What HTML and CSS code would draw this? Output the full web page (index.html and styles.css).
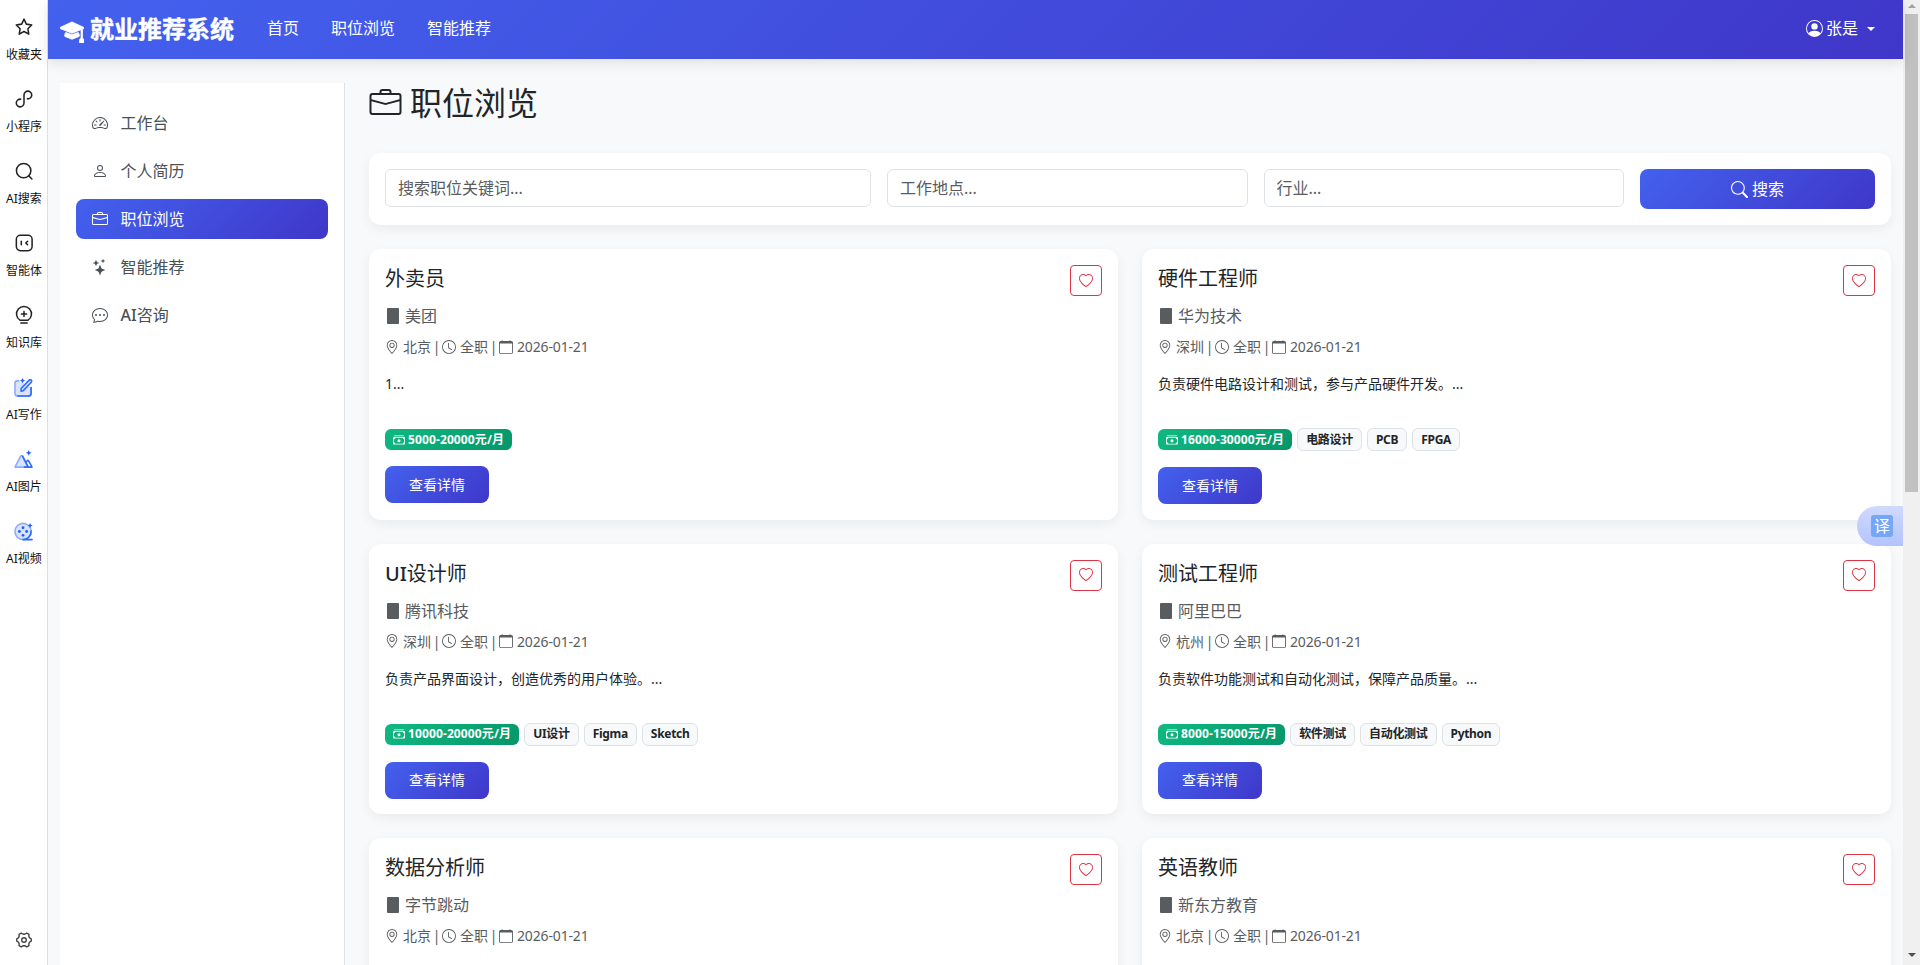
FILE: index.html
```html
<!DOCTYPE html>
<html lang="zh-CN">
<head>
<meta charset="utf-8">
<title>职位浏览</title>
<link rel="stylesheet" href="styles.css">
</head>
<body>
<svg class="sprite" aria-hidden="true">
  <symbol id="cap" viewBox="0 0 16 16"><path d="M8.211 2.047a.5.5 0 0 0-.422 0l-7.5 3.5a.5.5 0 0 0 .025.917l7.5 3a.5.5 0 0 0 .372 0L14 7.14V13a1 1 0 0 0-1 1v2h3v-2a1 1 0 0 0-1-1V6.739l.686-.275a.5.5 0 0 0 .025-.917z"/><path d="M4.176 9.032a.5.5 0 0 0-.656.327l-.5 1.7a.5.5 0 0 0 .294.605l4.5 1.8a.5.5 0 0 0 .372 0l4.5-1.8a.5.5 0 0 0 .294-.605l-.5-1.7a.5.5 0 0 0-.656-.327L8 10.466z"/></symbol>
  <symbol id="speed" viewBox="0 0 16 16"><path d="M8 4a.5.5 0 0 1 .5.5V6a.5.5 0 0 1-1 0V4.5A.5.5 0 0 1 8 4M3.732 5.732a.5.5 0 0 1 .707 0l.915.914a.5.5 0 1 1-.708.708l-.914-.915a.5.5 0 0 1 0-.707M2 10a.5.5 0 0 1 .5-.5h1.586a.5.5 0 0 1 0 1H2.5A.5.5 0 0 1 2 10m9.5 0a.5.5 0 0 1 .5-.5h1.5a.5.5 0 0 1 0 1H12a.5.5 0 0 1-.5-.5m.754-4.246a.39.39 0 0 0-.527-.02L7.547 9.31a.91.91 0 1 0 1.302 1.258l3.434-4.297a.39.39 0 0 0-.029-.518z"/><path fill-rule="evenodd" d="M0 10a8 8 0 1 1 15.547 2.661c-.442 1.253-1.845 1.602-2.932 1.25C11.309 13.488 9.475 13 8 13c-1.474 0-3.31.488-4.615.911-1.087.352-2.49.003-2.932-1.25A8 8 0 0 1 0 10m8-7a7 7 0 0 0-6.603 9.329c.203.575.923.876 1.68.63C4.397 12.533 6.358 12 8 12s3.604.532 4.923.96c.757.245 1.477-.056 1.68-.631A7 7 0 0 0 8 3"/></symbol>
  <symbol id="person" viewBox="0 0 16 16"><path d="M8 8a3 3 0 1 0 0-6 3 3 0 0 0 0 6m2-3a2 2 0 1 1-4 0 2 2 0 0 1 4 0m4 8c0 1-1 1-1 1H3s-1 0-1-1 1-4 6-4 6 3 6 4m-1-.004c-.001-.246-.154-.986-.832-1.664C11.516 10.68 10.289 10 8 10s-3.516.68-4.168 1.332c-.678.678-.83 1.418-.832 1.664z"/></symbol>
  <symbol id="case" viewBox="0 0 16 16"><path d="M6.5 1A1.5 1.5 0 0 0 5 2.5V3H1.5A1.5 1.5 0 0 0 0 4.5v8A1.5 1.5 0 0 0 1.5 14h13a1.5 1.5 0 0 0 1.5-1.5v-8A1.5 1.5 0 0 0 14.5 3H11v-.5A1.5 1.5 0 0 0 9.5 1zm0 1h3a.5.5 0 0 1 .5.5V3H6v-.5a.5.5 0 0 1 .5-.5m1.886 6.914L15 7.151V12.5a.5.5 0 0 1-.5.5h-13a.5.5 0 0 1-.5-.5V7.15l6.614 1.764a1.5 1.5 0 0 0 .772 0M1.5 4h13a.5.5 0 0 1 .5.5v1.616L8.129 7.948a.5.5 0 0 1-.258 0L1 6.116V4.5a.5.5 0 0 1 .5-.5"/></symbol>
  <symbol id="stars" viewBox="0 0 16 16"><path d="M7.657 6.247c.11-.33.576-.33.686 0l.645 1.937a2.89 2.89 0 0 0 1.829 1.828l1.936.645c.33.11.33.576 0 .686l-1.937.645a2.89 2.89 0 0 0-1.828 1.829l-.645 1.936a.361.361 0 0 1-.686 0l-.645-1.937a2.89 2.89 0 0 0-1.828-1.828l-1.937-.645a.361.361 0 0 1 0-.686l1.937-.645a2.89 2.89 0 0 0 1.828-1.828zM3.794 1.148a.217.217 0 0 1 .412 0l.387 1.162c.173.518.579.924 1.097 1.097l1.162.387a.217.217 0 0 1 0 .412l-1.162.387A1.73 1.73 0 0 0 4.593 5.69l-.387 1.162a.217.217 0 0 1-.412 0L3.407 5.69A1.73 1.73 0 0 0 2.31 4.593l-1.162-.387a.217.217 0 0 1 0-.412l1.162-.387A1.73 1.73 0 0 0 3.407 2.31zM10.863.099a.145.145 0 0 1 .274 0l.258.774c.115.346.386.617.732.732l.774.258a.145.145 0 0 1 0 .274l-.774.258a1.16 1.16 0 0 0-.732.732l-.258.774a.145.145 0 0 1-.274 0l-.258-.774a1.16 1.16 0 0 0-.732-.732L9.1 2.137a.145.145 0 0 1 0-.274l.774-.258c.346-.115.617-.386.732-.732z"/></symbol>
  <symbol id="chat" viewBox="0 0 16 16"><path d="M5 8a1 1 0 1 1-2 0 1 1 0 0 1 2 0m4 0a1 1 0 1 1-2 0 1 1 0 0 1 2 0m3 1a1 1 0 1 0 0-2 1 1 0 0 0 0 2"/><path d="m2.165 15.803.02-.004c1.83-.363 2.948-.842 3.468-1.105A9 9 0 0 0 8 15c4.418 0 8-3.134 8-7s-3.582-7-8-7-8 3.134-8 7c0 1.76.743 3.37 1.97 4.6a10.4 10.4 0 0 1-.524 2.318l-.003.011a11 11 0 0 1-.244.637c-.079.186.074.394.273.362a22 22 0 0 0 .693-.125m.8-3.108a1 1 0 0 0-.287-.801C1.618 10.83 1 9.468 1 8c0-3.192 3.004-6 7-6s7 2.808 7 6-3.004 6-7 6a8 8 0 0 1-2.088-.272 1 1 0 0 0-.711.074c-.387.196-1.24.57-2.634.893a11 11 0 0 0 .398-2"/></symbol>
  <symbol id="user" viewBox="0 0 16 16"><path d="M11 6a3 3 0 1 1-6 0 3 3 0 0 1 6 0"/><path fill-rule="evenodd" d="M0 8a8 8 0 1 1 16 0A8 8 0 0 1 0 8m8-7a7 7 0 0 0-5.468 11.37C3.242 11.226 4.805 10 8 10s4.757 1.225 5.468 2.37A7 7 0 0 0 8 1"/></symbol>
  <symbol id="search" viewBox="0 0 16 16"><path d="M11.742 10.344a6.5 6.5 0 1 0-1.397 1.398h-.001q.044.06.098.115l3.85 3.85a1 1 0 0 0 1.415-1.414l-3.85-3.85a1 1 0 0 0-.115-.1zM12 6.5a5.5 5.5 0 1 1-11 0 5.5 5.5 0 0 1 11 0"/></symbol>
  <symbol id="heart" viewBox="0 0 16 16"><path d="m8 2.748-.717-.737C5.6.281 2.514.878 1.4 3.053c-.523 1.023-.641 2.5.314 4.385.92 1.815 2.834 3.989 6.286 6.357 3.452-2.368 5.365-4.542 6.286-6.357.955-1.886.838-3.362.314-4.385C13.486.878 10.4.28 8.717 2.01zM8 15C-7.333 4.868 3.279-3.04 7.824 1.143q.09.083.176.171a3 3 0 0 1 .176-.17C12.72-3.042 23.333 4.867 8 15"/></symbol>
  <symbol id="geo" viewBox="0 0 16 16"><path d="M12.166 8.94c-.524 1.062-1.234 2.12-1.96 3.07A32 32 0 0 1 8 14.58a32 32 0 0 1-2.206-2.57c-.726-.95-1.436-2.008-1.96-3.07C3.304 7.867 3 6.862 3 6a5 5 0 0 1 10 0c0 .862-.305 1.867-.834 2.94M8 16s6-5.686 6-10A6 6 0 0 0 2 6c0 4.314 6 10 6 10"/><path d="M8 8a2 2 0 1 1 0-4 2 2 0 0 1 0 4m0 1a3 3 0 1 0 0-6 3 3 0 0 0 0 6"/></symbol>
  <symbol id="clock" viewBox="0 0 16 16"><path d="M8 3.5a.5.5 0 0 0-1 0V9a.5.5 0 0 0 .252.434l3.5 2a.5.5 0 0 0 .496-.868L8 8.71z"/><path d="M8 16A8 8 0 1 0 8 0a8 8 0 0 0 0 16m7-8A7 7 0 1 1 1 8a7 7 0 0 1 14 0"/></symbol>
  <symbol id="cal" viewBox="0 0 16 16"><path d="M3.5 0a.5.5 0 0 1 .5.5V1h8V.5a.5.5 0 0 1 1 0V1h1a2 2 0 0 1 2 2v11a2 2 0 0 1-2 2H2a2 2 0 0 1-2-2V3a2 2 0 0 1 2-2h1V.5a.5.5 0 0 1 .5-.5M1 4v10a1 1 0 0 0 1 1h12a1 1 0 0 0 1-1V4z"/></symbol>
  <symbol id="cash" viewBox="0 0 16 16"><path d="M1 3a1 1 0 0 1 1-1h12a1 1 0 0 1 1 1zm7 8a2 2 0 1 0 0-4 2 2 0 0 0 0 4"/><path d="M0 5a1 1 0 0 1 1-1h14a1 1 0 0 1 1 1v8a1 1 0 0 1-1 1H1a1 1 0 0 1-1-1zm3 0a2 2 0 0 1-2 2v4a2 2 0 0 1 2 2h10a2 2 0 0 1 2-2V7a2 2 0 0 1-2-2z"/></symbol>
</svg>

<div class="window">
  <aside class="rail">
    <div class="rail-list">
      <div class="rail-item"><svg class="rail-icon" viewBox="0 0 20 20"><path d="M10 1.300l2.600 5.500 6 .9-4.300 4.200 1 6-5.300-2.900-5.300 2.900 1-6-4.300-4.200 6-.9z"/></svg><span>收藏夹</span></div>
      <div class="rail-item"><svg class="rail-icon" viewBox="0 0 20 20"><path d="M6.300 10.200A4.300 4.300 0 1 0 10 14.400V5.600A4.300 4.300 0 1 1 13.700 9.800"/></svg><span>小程序</span></div>
      <div class="rail-item"><svg class="rail-icon" viewBox="0 0 20 20"><circle cx="9.6" cy="9.6" r="8"/><path d="M15.3 15.3l3.5 3.5"/></svg><span>AI搜索</span></div>
      <div class="rail-item"><svg class="rail-icon" viewBox="0 0 20 20"><rect x="1.5" y="1.5" width="17.5" height="17" rx="4.5"/><path d="M7 8v4M14 8l-2 2 2 2"/></svg><span>智能体</span></div>
      <div class="rail-item"><svg class="rail-icon" viewBox="0 0 20 20"><path d="M5.500 15.800a8.300 8.300 0 1 1 9 0zM6.500 19h7M10 6v5.600M7.200 8.800h5.600"/></svg><span>知识库</span></div>
      <div class="rail-item"><svg class="rail-icon tint" viewBox="0 0 20 20"><path class="soft" d="M5 3H3.500Q1 3 1 5.500v10.500Q1 19 4 19h11q3 0 3-3V10"/><path d="M18 10v6q0 3-3 3H4"/><path class="pen" d="M7.500 14v-3L16 2.300q1.200-1 2.200 0t0 2.200L9.500 13.500z"/><path class="dot" d="M9 0l.9 1.800 1.800.9-1.800.9L9 5.400l-.9-1.800-1.800-.9 1.800-.9z"/></svg><span>AI写作</span></div>
      <div class="rail-item"><svg class="rail-icon tint" viewBox="0 0 20 20"><path class="soft" d="M1 18L7 6.500Q8 5 9 6.500L15 18z"/><path d="M11 18H19L15.400 11.500q-.8-1.200-1.600 0l-1.200 2L9 6.500M12.600 13.500L15 18"/><path class="dot" d="M15.500 0l.9 2.100 2.100.9-2.100.9-.9 2.100-.9-2.100-2.100-.9 2.100-.9z"/></svg><span>AI图片</span></div>
      <div class="rail-item"><svg class="rail-icon tint" viewBox="0 0 20 20"><circle class="soft" cx="9.500" cy="10" r="8.500"/><path d="M18 9.500a8.500 8.500 0 0 1-8.500 9H19"/><g class="dot"><circle cx="9.500" cy="6" r="1.500"/><circle cx="5.700" cy="10" r="1.500"/><circle cx="13.300" cy="10" r="1.500"/><circle cx="9.500" cy="14" r="1.500"/><path d="M17 1l.9 1.800 1.800.9-1.800.9-.9 1.800-.9-1.800-1.800-.9 1.800-.9z"/></g></svg><span>AI视频</span></div>
    </div>
    <svg class="gear" viewBox="0 0 16 16"><path d="M5.200 1.100Q6.500 2.300 8 2.300t2.800-1.200l2.200 1.300q-.4 1.800.3 3t2.200 1.700v1.800q-1.500.5-2.200 1.700t-.3 3l-2.200 1.300Q9.500 13.700 8 13.700t-2.800 1.200L3 13.600q.4-1.800-.3-3T.5 8.900V7.100Q2 6.600 2.700 5.400t.3-3z"/><circle cx="8" cy="8" r="2.300"/></svg>
  </aside>

  <div class="page">
    <nav class="navbar">
      <div class="brand"><svg class="icon"><use href="#cap"/></svg><span>就业推荐系统</span></div>
      <div class="links"><a>首页</a><a>职位浏览</a><a>智能推荐</a></div>
      <div class="account"><svg class="icon"><use href="#user"/></svg><span>张是</span><i class="caret"></i></div>
    </nav>
    <div class="body">
      <div class="sidebar">
        <a class="side-link"><svg class="icon"><use href="#speed"/></svg>工作台</a>
        <a class="side-link"><svg class="icon"><use href="#person"/></svg>个人简历</a>
        <a class="side-link active"><svg class="icon"><use href="#case"/></svg>职位浏览</a>
        <a class="side-link"><svg class="icon"><use href="#stars"/></svg>智能推荐</a>
        <a class="side-link"><svg class="icon"><use href="#chat"/></svg><span><span class="latin">AI</span>咨询</span></a>
      </div>
      <main class="main">
        <h2 class="heading"><svg class="icon"><use href="#case"/></svg>职位浏览</h2>
        <form class="panel filters">
          <input class="field" placeholder="搜索职位关键词...">
          <input class="field" placeholder="工作地点...">
          <input class="field" placeholder="行业...">
          <button type="button" class="submit"><svg class="icon"><use href="#search"/></svg>搜索</button>
        </form>
        <div class="jobs">
          <article class="panel job">
            <div class="job-head"><h5>外卖员</h5><span class="fav"><svg class="icon"><use href="#heart"/></svg></span></div>
            <div class="company"><i class="building"></i>美团</div>
            <div class="meta"><svg class="icon"><use href="#geo"/></svg><span>北京</span><b>|</b><svg class="icon"><use href="#clock"/></svg><span>全职</span><b>|</b><svg class="icon"><use href="#cal"/></svg><span class="date">2026-01-21</span></div>
            <p class="desc">1...</p>
            <div class="tags plain"><span class="salary"><svg class="icon"><use href="#cash"/></svg>5000-20000元/月</span></div>
            <a class="detail">查看详情</a>
          </article>
          <article class="panel job">
            <div class="job-head"><h5>硬件工程师</h5><span class="fav"><svg class="icon"><use href="#heart"/></svg></span></div>
            <div class="company"><i class="building"></i>华为技术</div>
            <div class="meta"><svg class="icon"><use href="#geo"/></svg><span>深圳</span><b>|</b><svg class="icon"><use href="#clock"/></svg><span>全职</span><b>|</b><svg class="icon"><use href="#cal"/></svg><span class="date">2026-01-21</span></div>
            <p class="desc">负责硬件电路设计和测试，参与产品硬件开发。...</p>
            <div class="tags"><span class="salary"><svg class="icon"><use href="#cash"/></svg>16000-30000元/月</span><span class="tag">电路设计</span><span class="tag">PCB</span><span class="tag">FPGA</span></div>
            <a class="detail">查看详情</a>
          </article>
          <article class="panel job">
            <div class="job-head"><h5><span class="latin">UI</span>设计师</h5><span class="fav"><svg class="icon"><use href="#heart"/></svg></span></div>
            <div class="company"><i class="building"></i>腾讯科技</div>
            <div class="meta"><svg class="icon"><use href="#geo"/></svg><span>深圳</span><b>|</b><svg class="icon"><use href="#clock"/></svg><span>全职</span><b>|</b><svg class="icon"><use href="#cal"/></svg><span class="date">2026-01-21</span></div>
            <p class="desc">负责产品界面设计，创造优秀的用户体验。...</p>
            <div class="tags"><span class="salary"><svg class="icon"><use href="#cash"/></svg>10000-20000元/月</span><span class="tag">UI设计</span><span class="tag">Figma</span><span class="tag">Sketch</span></div>
            <a class="detail">查看详情</a>
          </article>
          <article class="panel job">
            <div class="job-head"><h5>测试工程师</h5><span class="fav"><svg class="icon"><use href="#heart"/></svg></span></div>
            <div class="company"><i class="building"></i>阿里巴巴</div>
            <div class="meta"><svg class="icon"><use href="#geo"/></svg><span>杭州</span><b>|</b><svg class="icon"><use href="#clock"/></svg><span>全职</span><b>|</b><svg class="icon"><use href="#cal"/></svg><span class="date">2026-01-21</span></div>
            <p class="desc">负责软件功能测试和自动化测试，保障产品质量。...</p>
            <div class="tags"><span class="salary"><svg class="icon"><use href="#cash"/></svg>8000-15000元/月</span><span class="tag">软件测试</span><span class="tag">自动化测试</span><span class="tag">Python</span></div>
            <a class="detail">查看详情</a>
          </article>
          <article class="panel job">
            <div class="job-head"><h5>数据分析师</h5><span class="fav"><svg class="icon"><use href="#heart"/></svg></span></div>
            <div class="company"><i class="building"></i>字节跳动</div>
            <div class="meta"><svg class="icon"><use href="#geo"/></svg><span>北京</span><b>|</b><svg class="icon"><use href="#clock"/></svg><span>全职</span><b>|</b><svg class="icon"><use href="#cal"/></svg><span class="date">2026-01-21</span></div>
          </article>
          <article class="panel job">
            <div class="job-head"><h5>英语教师</h5><span class="fav"><svg class="icon"><use href="#heart"/></svg></span></div>
            <div class="company"><i class="building"></i>新东方教育</div>
            <div class="meta"><svg class="icon"><use href="#geo"/></svg><span>北京</span><b>|</b><svg class="icon"><use href="#clock"/></svg><span>全职</span><b>|</b><svg class="icon"><use href="#cal"/></svg><span class="date">2026-01-21</span></div>
          </article>
        </div>
      </main>
    </div>
    <div class="translate"><span>译</span></div>
  </div>

  <div class="scrollbar"><i class="arrow up"></i><div class="thumb"></div><i class="arrow down"></i></div>
</div>
</body>
</html>
```
FILE: styles.css
```css
* { box-sizing: border-box; }
body {
  margin: 0;
  overflow: hidden;
  background: #f8f9fa;
  color: #212529;
  font: 400 16px/24px "Noto Sans", "Noto Sans CJK SC", sans-serif;
}
.sprite { display: none; }
.icon { display: block; flex: none; width: 1em; height: 1em; fill: currentColor; }
.latin { font-weight: 500; }

.window { display: flex; height: 965px; overflow: hidden; }

/* browser rail */
.rail {
  flex: none;
  width: 48px;
  display: flex;
  flex-direction: column;
  justify-content: space-between;
  align-items: center;
  padding: 18px 0 17px 1px;
  background: #fff;
  border-right: 1px solid #dcdfe4;
}
.rail-item {
  display: flex;
  flex-direction: column;
  align-items: center;
  gap: 10px;
  height: 72px;
  font-size: 12px;
  line-height: 18px;
  color: #111;
  white-space: nowrap;
}
.rail-icon {
  width: 18px;
  height: 18px;
  overflow: visible;
  fill: none;
  stroke: #222;
  stroke-width: 1.7;
  stroke-linejoin: round;
  stroke-linecap: round;
}
.rail-icon.tint { width: 19px; height: 19px; margin-bottom: -1px; stroke: #2f6bff; }
.tint .soft { stroke: #8fadf8; fill: #d9e3fd; }
.tint .pen { fill: #d9e3fd; }
.tint .dot { fill: #1f5fff; stroke: none; }
.gear { width: 16px; height: 16px; fill: none; stroke: #444; stroke-width: 1.4; stroke-linejoin: round; }

/* page */
.page { position: relative; flex: 1; min-width: 0; background: #f8f9fb; }
.navbar {
  display: flex;
  align-items: center;
  height: 59px;
  padding: 0 28px 0 12px;
  color: #fff;
  background: linear-gradient(135deg, #4361ee, #3f37c9);
  box-shadow: 0 4px 12px rgba(0, 0, 0, .1);
}
.brand {
  display: flex;
  align-items: center;
  gap: 6px;
  margin-right: 32px;
  font-size: 24px;
  font-weight: 700;
  line-height: 36px;
  -webkit-text-stroke: .4px #fff;
}
.brand .icon { stroke: currentColor; stroke-width: .5; margin-top: 2px; }
.brand span { margin-top: -2px; }
.links { display: flex; gap: 32px; margin: -4px 0 0 1px; }
.account { display: flex; align-items: center; gap: 3px; margin-left: auto; margin-top: -2px; }
.account .icon { width: 17px; height: 17px; }
.account span { margin-top: -1px; }
.caret { margin-left: 6px; border: 4px solid transparent; border-top-color: #fff; border-bottom: 0; }

.body { display: flex; gap: 24px; padding: 24px 12px 0; }
.sidebar {
  flex: none;
  width: 285px;
  height: 900px;
  padding: 20px 16px;
  background: #fff;
  border-right: 1px solid #dee2e6;
}
.side-link {
  display: flex;
  align-items: center;
  gap: 12.5px;
  height: 40px;
  margin-bottom: 8px;
  padding: 0 16px;
  border-radius: 8px;
  color: #495057;
}
.side-link.active { color: #fff; background: linear-gradient(135deg, #4361ee, #3f37c9); }

.main { flex: 1; min-width: 0; }
.heading { display: flex; align-items: center; gap: 9px; margin: -1px 0 29px; height: 42px; font-size: 32px; font-weight: 400; }
.heading .icon { width: 33px; height: 32px; margin-right: -1px; }
.panel { background: #fff; border-radius: 12px; box-shadow: 0 4px 12px rgba(0, 0, 0, .06); }
.filters {
  display: grid;
  grid-template-columns: 486px 360.5px 360.5px 235px;
  gap: 16px;
  padding: 16px;
  height: 72px;
  margin-bottom: 24px;
}
.field {
  width: 100%;
  height: 38px;
  padding: 0 12px;
  border: 1px solid #dee2e6;
  border-radius: 6px;
  background: #fff;
  font: inherit;
}
.field::placeholder { color: #595c5f; opacity: 1; }
.submit {
  display: flex;
  align-items: center;
  justify-content: center;
  gap: 4px;
  height: 40px;
  border: 0;
  border-radius: 8px;
  color: #fff;
  background: linear-gradient(135deg, #4361ee, #3f37c9);
  font: inherit;
}
.submit .icon { width: 17px; height: 17px; }

.jobs { display: grid; grid-template-columns: 1fr 1fr; grid-auto-rows: 270.6px; gap: 24px; }
.job { padding: 16px; }
.job-head { display: flex; justify-content: space-between; height: 39px; }
.job-head h5 { margin: 0; font-size: 20px; font-weight: 400; line-height: 27px; }
.fav {
  display: flex;
  align-items: center;
  justify-content: center;
  width: 32px;
  height: 31px;
  border: 1px solid #dc3545;
  border-radius: 4px;
  color: #dc3545;
  font-size: 14px;
}
.company { display: flex; align-items: center; height: 24px; color: #595c5f; }
.building { width: 12px; height: 16px; margin: 0 6px 0 2px; border-radius: 1px; background: #595c5f; }
.meta { display: flex; align-items: center; gap: 4px; margin-top: 8px; height: 21px; font-size: 14px; line-height: 21px; color: #595c5f; }
.meta b { width: 3px; display: flex; justify-content: center; font-weight: 400; }
.date { letter-spacing: -.15px; }
.desc { margin: 16px 0 0; height: 42px; font-size: 14px; line-height: 21px; }
.tags { display: flex; align-items: center; gap: 5px; height: 23px; margin: 13px 0 16px; font-size: 12px; font-weight: 700; line-height: 12px; }
.tags.plain { margin-bottom: 15px; }
.salary {
  display: flex;
  align-items: center;
  gap: 3px;
  height: 21px;
  padding: 0 8px;
  border-radius: 6px;
  color: #fff;
  background: linear-gradient(135deg, #10b981, #059669);
  letter-spacing: .12px;
}
.tag {
  display: flex;
  align-items: center;
  height: 23px;
  padding: 0 8px;
  border: 1px solid #dee2e6;
  border-radius: 6px;
  background: #f8f9fa;
  letter-spacing: -.3px;
}
.detail {
  display: flex;
  align-items: center;
  justify-content: center;
  width: 104px;
  height: 37px;
  border-radius: 8px;
  color: #fff;
  background: linear-gradient(135deg, #4361ee, #3f37c9);
  font-size: 14px;
}

/* floating translate handle */
.translate {
  position: absolute;
  right: 0;
  top: 506px;
  display: flex;
  align-items: center;
  width: 46px;
  height: 40px;
  padding-left: 14px;
  border-radius: 20px 0 0 20px;
  background: linear-gradient(#cfdafd, #b3c3fe);
}
.translate span { width: 22px; height: 22px; border-radius: 3px; background: #76a6f8; color: #fff; font-size: 16px; line-height: 22px; text-align: center; }

.scrollbar {
  flex: none;
  display: flex;
  flex-direction: column;
  align-items: center;
  width: 17px;
  padding: 4px 0 8px;
  background: #f0f0f0;
}
.thumb { width: 13px; height: 478px; margin-top: 6px; background: #c1c1c1; }
.arrow { border: 4px solid transparent; }
.arrow.up { border-top: 0; border-bottom-color: #a3a3a3; }
.arrow.down { margin-top: auto; border-bottom: 0; border-top-color: #505050; }
```
